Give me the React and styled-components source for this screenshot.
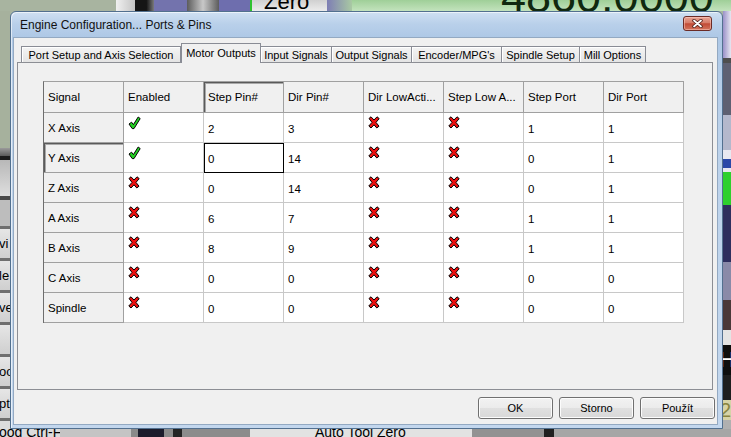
import React from 'react'
import styled, { createGlobalStyle } from 'styled-components'

const GlobalStyle = createGlobalStyle`
  html, body {
    margin: 0;
    padding: 0;
  }
  body {
    background: #a8b4a0;
    font-family: "Liberation Sans", Arial, sans-serif;
    overflow: hidden;
  }
`;

/* ---------- the Mach3 screen behind the dialog ---------- */

const Desktop = styled.div`
  display: grid;
  grid-template-columns: 10px 713px 8px;
  grid-template-rows: 11px 418px 8px;
  width: 731px;
  height: 437px;
  overflow: hidden;
  background: #a8b4a0;
`;

const Band = styled.div`
  display: flex;
  flex-direction: ${p => (p.$vertical ? 'column' : 'row')};
  grid-column: ${p => p.$col};
  grid-row: ${p => p.$row};
  overflow: hidden;
`;

const Swatch = styled.div`
  flex: ${p => (p.$size ? `0 0 ${p.$size}px` : '1 1 auto')};
  display: flex;
  align-items: ${p => p.$align || 'center'};
  box-sizing: border-box;
  background: ${p => p.$bg};
  border-top: ${p => (p.$sep ? `3px solid ${p.$sep}` : 'none')};
  overflow: hidden;
  white-space: nowrap;
`;

const SwatchText = styled.span`
  font-size: ${p => p.$fs}px;
  line-height: 1;
  color: ${p => p.$color || '#000'};
  margin: ${p => p.$m || '0'};
`;

const topBand = [
  { size: 116, bg: '#a8b4a0' },
  { size: 19, bg: 'linear-gradient(90deg, #f0f0f0, #c4c4c4)' },
  { size: 19, bg: 'linear-gradient(90deg, #151515 60%, #7a7a7a)' },
  { size: 33, bg: '#7373ad' },
  { size: 32, bg: 'linear-gradient(90deg, #5c5c5c, #c8c8c8 50%, #5c5c5c)' },
  { size: 31, bg: '#6e6eae' },
  { size: 2, bg: '#2fc22f' },
  { size: 75, bg: 'linear-gradient(#d0d0d0, #ececec)', text: 'Zero', fs: 22, m: '0 0 -2px 12px', align: 'flex-end' },
  { size: 25, bg: 'linear-gradient(90deg, #7e7eb4, #a9c9a3)' },
  { bg: 'linear-gradient(#9fcf98, #c3e3bd)', text: '4860.0000', fs: 45, m: '0 0 -8px 149px', align: 'flex-end', color: '#10280f' },
];

const leftBand = [
  { size: 137, bg: '#a6b19d' },
  { size: 8, bg: 'linear-gradient(#9a9a9a, #5a5a5a)' },
  { size: 4, bg: '#1c1c1c' },
  { size: 36, bg: 'linear-gradient(#b8b8b8, #dedede)' },
  { size: 4, bg: '#4a4a4a' },
  { size: 26, bg: '#bdbdbd' },
  ...['vi', 'le', 've', '', 'oo', 'pt'].map(t => ({
    size: 32, bg: 'linear-gradient(#e6e6e6, #cfcfcf)', sep: '#6f6f6f', text: t, fs: 13, m: '0 0 0 -1px',
  })),
  { size: 11, bg: '#dcdcdc', sep: '#6f6f6f' },
];

const rightBand = [
  { size: 47, bg: 'linear-gradient(90deg, #9a90c8, #e6e6f0)' },
  { size: 5, bg: '#4e4e4e' },
  { size: 52, bg: '#5e6072' },
  { size: 35, bg: '#b4b8cc' },
  { size: 22, bg: 'linear-gradient(#e8e8f0 40%, #2a48a8 40%, #2a48a8 80%, #e8e8f0 80%)' },
  { size: 33, bg: '#2ed02e' },
  { size: 57, bg: '#2e2e5e' },
  { size: 38, bg: '#8a8aa8' },
  { size: 30, bg: '#4a3838' },
  { size: 15, bg: '#e4e4e4' },
  { size: 30, bg: '#0e0e0e', text: 'H', fs: 22, color: '#fff', m: '0 0 0 -4px' },
  { size: 25, bg: '#1e1e1e' },
  { size: 20, bg: '#d6d3a6', text: '2', fs: 20, color: '#8a8540', m: '0 0 0 -3px' },
  { size: 9, bg: '#b0b0b0' },
];

const bottomBand = [
  { size: 60, bg: '#dcdcdc', text: 'ood Ctrl-F', fs: 14, m: '-4px 0 0 -1px', align: 'flex-start' },
  { size: 71, bg: '#c4c4c4' },
  { size: 7, bg: '#8a8a8a' },
  { size: 26, bg: '#1c1c2c' },
  { size: 9, bg: '#8a8a8a' },
  { size: 9, bg: '#242424' },
  { size: 68, bg: '#8c8c8c' },
  { size: 222, bg: '#e2e2e2', text: 'Auto Tool Zero', fs: 14, m: '-4px 0 0 65px', align: 'flex-start' },
  { size: 72, bg: '#929292' },
  { size: 10, bg: '#202020' },
  { bg: '#a6a6a6' },
];

const Backdrop = ({ items, ...rest }) => (
  <Band {...rest}>
    {items.map((s, i) => (
      <Swatch key={i} $size={s.size} $bg={s.bg} $sep={s.sep} $align={s.align}>
        {s.text && (
          <SwatchText $fs={s.fs} $color={s.color} $m={s.m}>{s.text}</SwatchText>
        )}
      </Swatch>
    ))}
  </Band>
);

/* ---------- dialog window ---------- */

const Window = styled.div`
  grid-column: 2;
  grid-row: 2;
  display: flex;
  flex-direction: column;
  box-sizing: border-box;
  border: 1px solid #52708f;
  border-radius: 6px 6px 0 0;
  padding: 0 4px 3px 2px;
  background: linear-gradient(180deg, #cfe0f2 0px, #b9d0ea 12px, #aec8e6 25px, #bcd2eb 120px, #c3d7ee 100%);
  box-shadow: inset 1px 1px 0 rgba(255, 255, 255, 0.6);
`;

const TitleBar = styled.div`
  display: flex;
  align-items: center;
  justify-content: space-between;
  height: 25px;
  padding: 0 6px 0 7px;
`;

const Title = styled.span`
  font-size: 12px;
  color: #111;
`;

const CloseButton = styled.div`
  align-self: flex-start;
  margin-top: 4px;
  width: 29px;
  height: 15px;
  box-sizing: border-box;
  display: flex;
  align-items: center;
  justify-content: center;
  border: 1px solid #6b2b26;
  border-radius: 3px;
  background: linear-gradient(#e9a494, #d67c69 45%, #c24b36 52%, #d2745d 100%);
  box-shadow: inset 0 0 0 1px rgba(255, 210, 200, 0.5);
`;

const Client = styled.div`
  flex: 1;
  display: flex;
  flex-direction: column;
  box-sizing: border-box;
  border: 1px solid #93a9c2;
  background: #f0f0f0;
  padding: 5px 0;
`;

const TabRow = styled.div`
  display: flex;
  align-items: flex-end;
  height: 19px;
  margin-left: 3px;
  padding-left: 4px;
  position: relative;
  z-index: 1;
`;

const Tab = styled.div`
  flex: 0 0 ${p => p.$width}px;
  box-sizing: border-box;
  height: ${p => (p.$active ? 20 : 16)}px;
  margin-bottom: ${p => (p.$active ? -1 : 0)}px;
  display: flex;
  align-items: center;
  justify-content: center;
  padding-bottom: ${p => (p.$active ? 1 : 0)}px;
  border: 1px solid #898c95;
  border-bottom: none;
  border-left-width: ${p => (p.$first || p.$active ? 1 : 0)}px;
  background: ${p => (p.$active ? '#f0f0f0' : 'linear-gradient(#f4f4f4, #e4e4e4)')};
  box-shadow: ${p => (p.$active ? 'none' : 'inset 1px 1px 0 #fff')};
  font-size: 11px;
  color: #000;
  white-space: nowrap;
`;

const Panel = styled.div`
  height: 328px;
  box-sizing: border-box;
  margin: 0 4px 0 3px;
  border: 1px solid #8c8e94;
  background: #f0f0f0;
`;

const ButtonRow = styled.div`
  display: flex;
  justify-content: flex-end;
  gap: 6px;
  margin-top: 7px;
  padding-right: 2px;
`;

const DialogButton = styled.div`
  width: 75px;
  height: 22px;
  box-sizing: border-box;
  display: flex;
  align-items: center;
  justify-content: center;
  border: 1px solid #707070;
  border-radius: 3px;
  background: linear-gradient(#f2f2f2, #ebebeb 50%, #e0e0e0 51%, #d8d8d8);
  box-shadow: inset 0 0 0 1px #fcfcfc;
  font-size: 11px;
  color: #000;
`;

/* ---------- motor outputs grid ---------- */

const Grid = styled.div`
  display: grid;
  grid-template-columns: repeat(8, 80px);
  grid-template-rows: 31px repeat(7, 30px);
  width: max-content;
  margin: 18px 0 0 25px;
  border-left: 1px solid #6e6e6e;
  border-top: 1px solid #a0a0a0;
  font-size: 11.5px;
  color: #000;
`;

const Cell = styled.div`
  box-sizing: border-box;
  display: flex;
  align-items: ${p => (p.$icon ? 'flex-start' : 'center')};
  padding: ${p => (p.$icon ? '3px 0 0 4px' : p.$head ? '0 0 0 4px' : '2px 0 0 4px')};
  border-right: 1px solid ${p => (p.$focus ? '#000' : p.$head ? '#a0a0a0' : '#c8c8c8')};
  border-bottom: 1px solid ${p => (p.$focus ? '#000' : p.$head ? '#a0a0a0' : '#c8c8c8')};
  background: ${p => (p.$head ? '#f0f0f0' : '#fff')};
  box-shadow: ${p =>
    p.$focus
      ? 'inset 1px 1px 0 #000'
      : p.$current
        ? 'inset 1px 1px 0 #5a5a5a, inset 2px 2px 0 #a8a8a8'
        : 'none'};
  white-space: nowrap;
  overflow: hidden;
`;

const CheckMark = () => (
  <svg width="13" height="14" viewBox="0 0 13 14">
    <path
      d="M1 8 L3.6 6.2 L5.4 8.6 L10.2 1 L12.2 2.6 L6 12.6 L4.2 12.6 Z"
      fill="#22d022"
      stroke="#000"
      strokeWidth="1"
      strokeLinejoin="round"
    />
  </svg>
);

const CrossMark = () => (
  <svg width="12" height="13" viewBox="0 0 12 13">
    <path
      d="M1 2.5 L3 0.8 L6 4 L9 0.8 L11.2 2.6 L8 6.4 L11 10.2 L8.8 12 L6 8.8 L3 12 L0.8 10 L4 6.4 Z"
      fill="#ee1010"
      stroke="#000"
      strokeWidth="1"
      strokeLinejoin="round"
    />
  </svg>
);

const tabs = [
  { label: 'Port Setup and Axis Selection', width: 160 },
  { label: 'Motor Outputs', width: 80, active: true },
  { label: 'Input Signals', width: 71 },
  { label: 'Output Signals', width: 80 },
  { label: "Encoder/MPG's", width: 90 },
  { label: 'Spindle Setup', width: 78 },
  { label: 'Mill Options', width: 66 },
];

const columns = ['Signal', 'Enabled', 'Step Pin#', 'Dir Pin#', 'Dir LowActi...', 'Step Low A...', 'Step Port', 'Dir Port'];

const axes = [
  { name: 'X Axis', enabled: true, step: 2, dir: 3, stepPort: 1, dirPort: 1 },
  { name: 'Y Axis', enabled: true, step: 0, dir: 14, stepPort: 0, dirPort: 1 },
  { name: 'Z Axis', enabled: false, step: 0, dir: 14, stepPort: 0, dirPort: 1 },
  { name: 'A Axis', enabled: false, step: 6, dir: 7, stepPort: 1, dirPort: 1 },
  { name: 'B Axis', enabled: false, step: 8, dir: 9, stepPort: 1, dirPort: 1 },
  { name: 'C Axis', enabled: false, step: 0, dir: 0, stepPort: 0, dirPort: 0 },
  { name: 'Spindle', enabled: false, step: 0, dir: 0, stepPort: 0, dirPort: 0 },
];

// current cell of the grid
const CURRENT_ROW = 1;
const CURRENT_COL = 2;

const Flag = ({ on }) => (on ? <CheckMark /> : <CrossMark />);

const MotorGrid = () => (
  <Grid>
    {columns.map((c, i) => (
      <Cell key={c} $head $current={i === CURRENT_COL}>{c}</Cell>
    ))}
    {axes.map((a, r) => (
      <React.Fragment key={a.name}>
        <Cell $head $current={r === CURRENT_ROW}>{a.name}</Cell>
        <Cell $icon><Flag on={a.enabled} /></Cell>
        <Cell $focus={r === CURRENT_ROW}>{a.step}</Cell>
        <Cell>{a.dir}</Cell>
        <Cell $icon><Flag on={false} /></Cell>
        <Cell $icon><Flag on={false} /></Cell>
        <Cell>{a.stepPort}</Cell>
        <Cell>{a.dirPort}</Cell>
      </React.Fragment>
    ))}
  </Grid>
);

const App = () => (
  <>
    <GlobalStyle />
    <Desktop>
      <Backdrop items={topBand} $col="1 / -1" $row="1" />
      <Backdrop items={leftBand} $col="1" $row="2" $vertical />
      <Window>
        <TitleBar>
          <Title>Engine Configuration... Ports &amp; Pins</Title>
          <CloseButton>
            <svg width="11" height="9" viewBox="0 0 11 9">
              <path d="M2 1.5 L9 7.5 M9 1.5 L2 7.5" stroke="#4b1d18" strokeWidth="3.4" strokeLinecap="round" />
              <path d="M2 1.5 L9 7.5 M9 1.5 L2 7.5" stroke="#fff" strokeWidth="1.8" strokeLinecap="round" />
            </svg>
          </CloseButton>
        </TitleBar>
        <Client>
          <TabRow>
            {tabs.map((t, i) => (
              <Tab key={t.label} $width={t.width} $active={t.active} $first={i === 0}>
                {t.label}
              </Tab>
            ))}
          </TabRow>
          <Panel>
            <MotorGrid />
          </Panel>
          <ButtonRow>
            <DialogButton>OK</DialogButton>
            <DialogButton>Storno</DialogButton>
            <DialogButton>Použít</DialogButton>
          </ButtonRow>
        </Client>
      </Window>
      <Backdrop items={rightBand} $col="3" $row="2" $vertical />
      <Backdrop items={bottomBand} $col="1 / -1" $row="3" />
    </Desktop>
  </>
);

export default App
